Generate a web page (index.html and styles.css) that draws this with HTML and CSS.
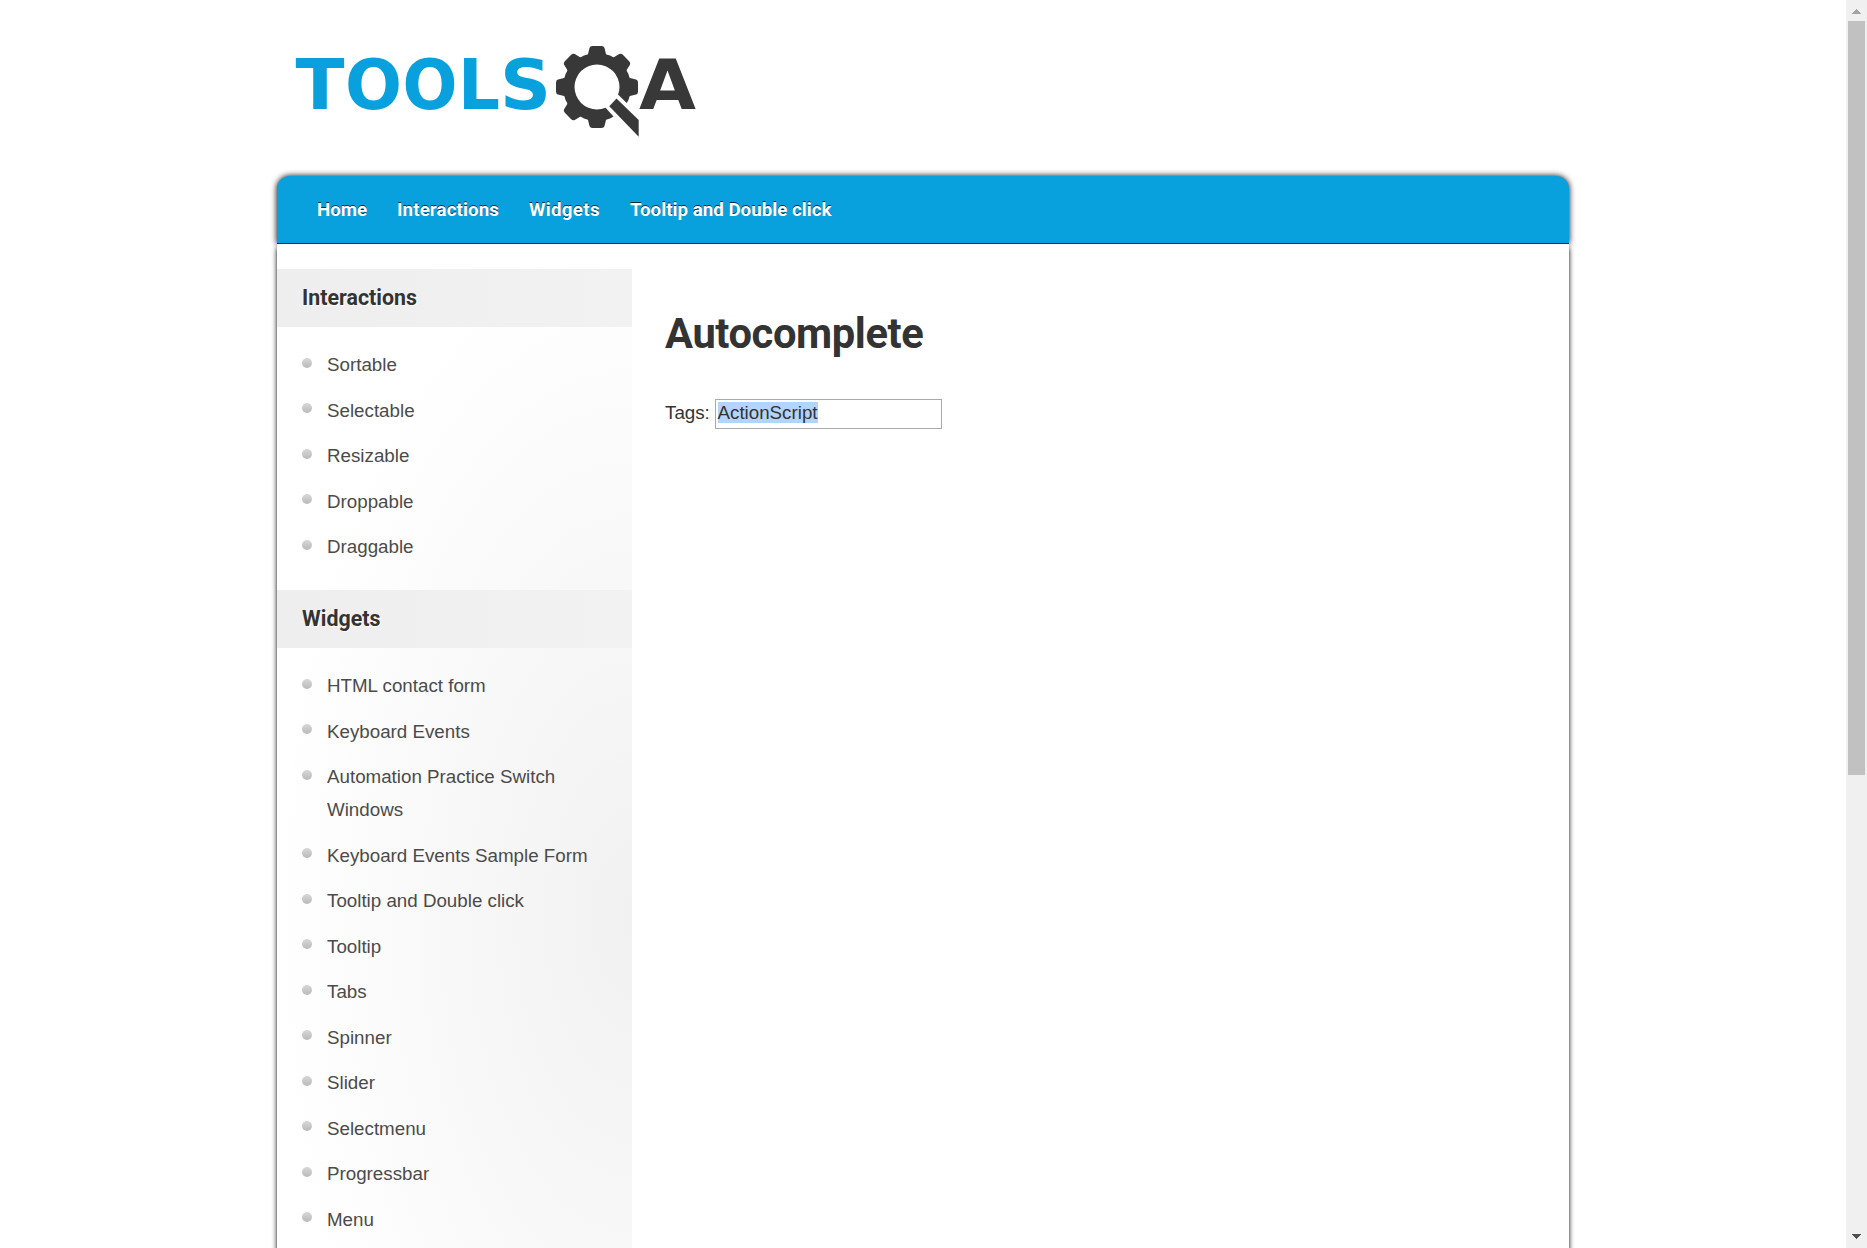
FILE: index.html
```html
<!DOCTYPE html>
<html lang="en">
<head>
<meta charset="utf-8">
<title>Autocomplete</title>
<link rel="stylesheet" href="styles.css">
</head>
<body>
<div class="page">
  <header class="header">
    <svg class="logo" width="430" height="120" viewBox="0 0 430 120" role="img" aria-label="ToolsQA">
      <g class="logo-tools">
        <text x="15.500" y="79" textLength="49" lengthAdjust="spacingAndGlyphs">T</text>
        <text x="65" y="79" textLength="57" lengthAdjust="spacingAndGlyphs">O</text>
        <text x="122.500" y="79" textLength="55" lengthAdjust="spacingAndGlyphs">O</text>
        <text x="178" y="79" textLength="42" lengthAdjust="spacingAndGlyphs">L</text>
        <text x="220" y="79" textLength="51" lengthAdjust="spacingAndGlyphs">S</text>
      </g>
      <g fill="#383838">
        <circle cx="317" cy="57" r="34"/>
        <path id="tooth" d="M307.500 26 L309.500 18 Q310 16 312.500 16 H321.500 Q324 16 324.500 18 L326.500 26Z"/>
        <use href="#tooth" transform="rotate(45 317 57)"/>
        <use href="#tooth" transform="rotate(90 317 57)"/>
        <use href="#tooth" transform="rotate(180 317 57)"/>
        <use href="#tooth" transform="rotate(225 317 57)"/>
        <use href="#tooth" transform="rotate(270 317 57)"/>
        <use href="#tooth" transform="rotate(315 317 57)"/>
      </g>
      <circle cx="317" cy="57" r="22.500" fill="#fff"/>
      <path d="M324 76 L337 63.500 L362 88 V110 L352 107Z" fill="#fff"/>
      <path d="M336.500 68.500 L358.700 90 V106.700 L329.300 76.300Z" fill="#383838"/>
      <text class="logo-a" x="359" y="79" textLength="57" lengthAdjust="spacingAndGlyphs">A</text>
    </svg>
  </header>
  <div class="container">
    <nav class="nav">
      <a class="nav-home">Home</a><a class="nav-interactions">Interactions</a><a class="nav-widgets">Widgets</a><a class="nav-tooltip">Tooltip and Double click</a>
    </nav>
    <div class="body">
      <aside class="sidebar">
        <h3 class="title">Interactions</h3>
        <ul class="list">
          <li>Sortable</li><li>Selectable</li><li>Resizable</li><li>Droppable</li><li>Draggable</li>
        </ul>
        <h3 class="title">Widgets</h3>
        <ul class="list">
          <li>HTML contact form</li><li>Keyboard Events</li><li>Automation Practice Switch Windows</li><li>Keyboard Events Sample Form</li><li>Tooltip and Double click</li><li>Tooltip</li><li>Tabs</li><li>Spinner</li><li>Slider</li><li>Selectmenu</li><li>Progressbar</li><li>Menu</li>
        </ul>
      </aside>
      <main class="main">
        <h1 class="heading">Autocomplete</h1>
        <div class="field"><span class="label">Tags:</span><div class="input"><span class="selected">ActionScript</span></div></div>
      </main>
    </div>
  </div>
</div>
<div class="scrollbar">
  <svg width="9" height="5" viewBox="0 0 9 5" shape-rendering="crispEdges"><path d="M4.500 0 L9 5 H0Z" fill="#a3a3a3"/></svg>
  <div class="thumb"></div>
  <svg class="down" width="9" height="5" viewBox="0 0 9 5" shape-rendering="crispEdges"><path d="M0 0 H9 L4.500 5Z" fill="#505050"/></svg>
</div>
</body>
</html>
```
FILE: styles.css
```css
* { box-sizing: border-box; }
body {
  margin: 0;
  height: 1248px;
  overflow: hidden;
  display: flex;
  background: #fff;
  color: #333;
  font-family: "Liberation Sans", Arial, sans-serif;
  font-size: 18.75px;
}
.page { flex: 1; height: 1248px; overflow: hidden; }
.header { height: 176px; padding: 30px 0 0 280px; }
.logo { display: block; }
.logo-tools, .logo-a { font: bold 70px "DejaVu Sans", sans-serif; fill: #08a1de; }
.logo-a { fill: #383838; }
.container { width: 1292px; margin-left: 277px; }
.nav {
  height: 68px;
  display: flex;
  align-items: center;
  padding-left: 40px;
  background: #09a1dd;
  border-bottom: 1px solid #16374a;
  border-radius: 13px 13px 0 0;
  box-shadow: 0 0 6px #000;
  color: #fff;
  font: bold 18.75px Roboto, sans-serif;
  text-shadow: 0 -1px 0 rgba(0, 0, 0, 0.75);
  white-space: nowrap;
}
.nav-home { width: 80px; }
.nav-interactions { width: 132px; letter-spacing: 0.1px; }
.nav-widgets { width: 101px; letter-spacing: 0.3px; }
.body {
  position: relative;
  display: flex;
  height: 1100px;
  background: #fff;
  box-shadow: 0 4px 5px #000;
}
.sidebar {
  width: 355px;
  padding-top: 25px;
  background: radial-gradient(355px 680px at 100% 676px, #f1f1f1, #fff);
}
.title {
  margin: 0;
  height: 58px;
  padding-left: 25px;
  background: linear-gradient(90deg, #eee, #f2f2f2);
  font: bold 21.4px/58px Roboto, sans-serif;
  text-shadow: 1px 1px 0 #fff;
}
.list {
  list-style: none;
  margin: 0;
  padding: 21.2px 30px 14.3px 25px;
  color: #4b4b4b;
}
.list li {
  padding-left: 25px;
  margin-bottom: 12.5px;
  line-height: 33px;
}
.list li::before {
  content: "";
  float: left;
  width: 10px;
  height: 10px;
  margin: 9.5px 0 0 -25px;
  border-radius: 50%;
  background: linear-gradient(#d8d8d8, #b9b9b9);
}
.main { padding: 63px 0 0 33px; }
.heading { margin: 0; font: bold 41.7px/54px Roboto, sans-serif; letter-spacing: -0.4px; }
.field { display: flex; align-items: center; margin-top: 38px; height: 30px; }
.label { width: 45px; margin: 0 4.500px 2px 0; }
.input {
  width: 227px;
  height: 30px;
  padding: 2px;
  border: 1px solid #a9a9a9;
  line-height: 21px;
}
.selected { display: inline-block; background: #b3d4fc; }
.scrollbar {
  width: 21px;
  height: 1248px;
  display: flex;
  flex-direction: column;
  align-items: center;
  padding: 9px 0;
  background: #f0f0f0;
}
.thumb { width: 17px; height: 754px; margin-top: 7px; background: #c1c1c1; }
.down { margin-top: auto; }
```
